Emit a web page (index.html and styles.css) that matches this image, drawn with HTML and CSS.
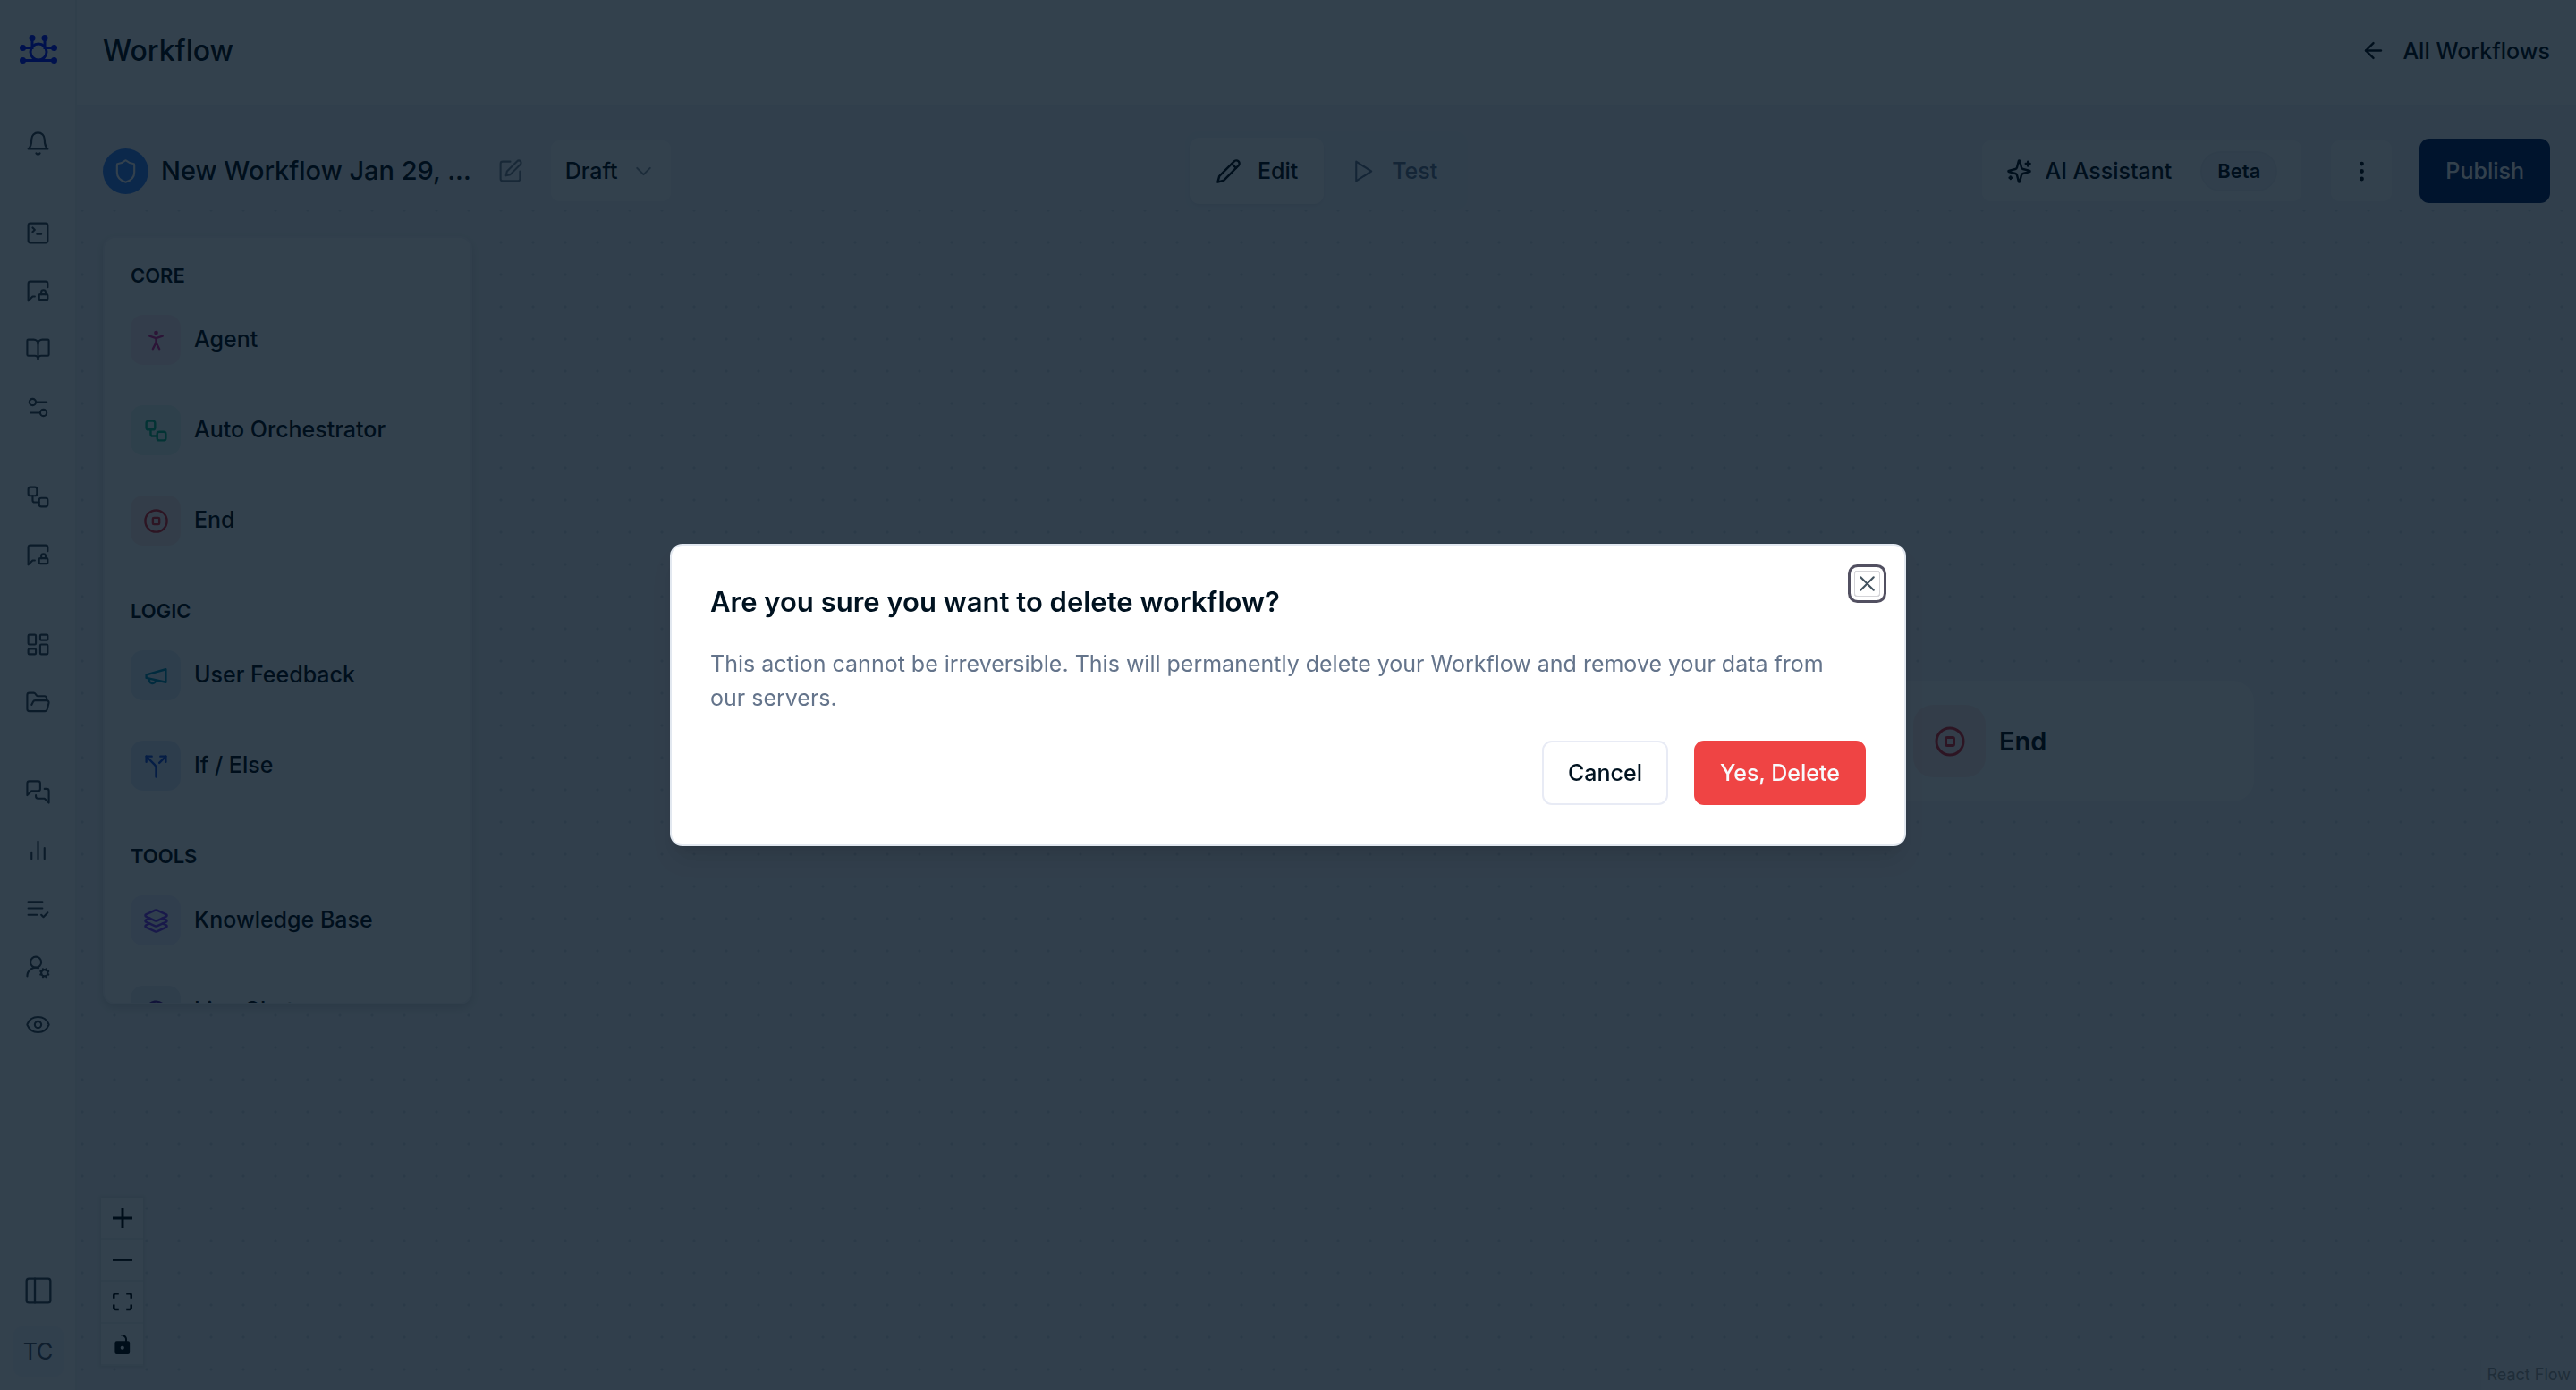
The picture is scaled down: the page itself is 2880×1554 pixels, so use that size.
FILE: index.html
```html
<!DOCTYPE html>
<html lang="en">
<head>
    <meta charset="UTF-8">
    <meta name="viewport" content="width=device-width, initial-scale=1.0">
    <title>Workflow</title>
    <link rel="stylesheet" href="styles.css">
</head>
<body>
    <!-- Icon sprite -->
    <svg class="sprite" aria-hidden="true">
        <symbol id="bell" viewBox="0 0 24 24"><path d="M6 8a6 6 0 0 1 12 0c0 7 3 9 3 9H3s3-2 3-9"/><path d="M10.3 21a1.94 1.94 0 0 0 3.4 0"/></symbol>
        <symbol id="terminal" viewBox="0 0 24 24"><rect x="3" y="3" width="18" height="18" rx="2"/><path d="m7 11 2-2-2-2"/><path d="M11 13h4"/></symbol>
        <symbol id="message-lock" viewBox="0 0 24 24"><path d="M19 15v-2a2 2 0 1 0-4 0v2"/><path d="M9 17H7l-4 4V5a2 2 0 0 1 2-2h14a2 2 0 0 1 2 2v3.5"/><rect x="13" y="15" width="8" height="5" rx="1"/></symbol>
        <symbol id="book" viewBox="0 0 24 24"><path d="M12 7v14"/><path d="M3 18a1 1 0 0 1-1-1V4a1 1 0 0 1 1-1h5a4 4 0 0 1 4 4 4 4 0 0 1 4-4h5a1 1 0 0 1 1 1v13a1 1 0 0 1-1 1h-6a3 3 0 0 0-3 3 3 3 0 0 0-3-3z"/></symbol>
        <symbol id="settings" viewBox="0 0 24 24"><path d="M20 7h-9"/><path d="M14 17H5"/><circle cx="17" cy="17" r="3"/><circle cx="7" cy="7" r="3"/></symbol>
        <symbol id="workflow" viewBox="0 0 24 24"><rect x="3" y="3" width="8" height="8" rx="2"/><path d="M7 11v4a2 2 0 0 0 2 2h4"/><rect x="13" y="13" width="8" height="8" rx="2"/></symbol>
        <symbol id="dashboard" viewBox="0 0 24 24"><rect x="3" y="3" width="7" height="9" rx="1"/><rect x="14" y="3" width="7" height="5" rx="1"/><rect x="14" y="12" width="7" height="9" rx="1"/><rect x="3" y="16" width="7" height="5" rx="1"/></symbol>
        <symbol id="folder" viewBox="0 0 24 24"><path d="m6 14 1.5-2.9A2 2 0 0 1 9.24 10H20a2 2 0 0 1 1.94 2.5l-1.54 6a2 2 0 0 1-1.95 1.5H4a2 2 0 0 1-2-2V5a2 2 0 0 1 2-2h3.9a2 2 0 0 1 1.69.9l.81 1.2a2 2 0 0 0 1.67.9H18a2 2 0 0 1 2 2v2"/></symbol>
        <symbol id="messages" viewBox="0 0 24 24"><path d="M14 9a2 2 0 0 1-2 2H6l-4 4V4a2 2 0 0 1 2-2h8a2 2 0 0 1 2 2z"/><path d="M18 9h2a2 2 0 0 1 2 2v11l-4-4h-6a2 2 0 0 1-2-2v-1"/></symbol>
        <symbol id="chart" viewBox="0 0 24 24"><path d="M18 20V10"/><path d="M12 20V4"/><path d="M6 20v-6"/></symbol>
        <symbol id="list-check" viewBox="0 0 24 24"><path d="M11 18H3"/><path d="m15 18 2 2 4-4"/><path d="M16 12H3"/><path d="M16 6H3"/></symbol>
        <symbol id="user-cog" viewBox="0 0 24 24"><path d="M2 21a8 8 0 0 1 10.434-7.62"/><circle cx="10" cy="8" r="5"/><circle cx="18" cy="18" r="3"/><path d="m19.5 14.3-.4.9"/><path d="m16.9 20.8-.4.9"/><path d="m21.7 19.5-.9-.4"/><path d="m15.2 16.9-.9-.4"/><path d="m21.7 16.5-.9.4"/><path d="m15.2 19.1-.9.4"/><path d="m19.5 21.7-.4-.9"/><path d="m16.9 15.2-.4-.9"/></symbol>
        <symbol id="eye" viewBox="0 0 24 24"><path d="M2.062 12.348a1 1 0 0 1 0-.696 10.75 10.75 0 0 1 19.876 0 1 1 0 0 1 0 .696 10.75 10.75 0 0 1-19.876 0"/><circle cx="12" cy="12" r="3"/></symbol>
        <symbol id="panel-left" viewBox="0 0 24 24"><rect x="2" y="2" width="20" height="20" rx="2"/><path d="M9 2v20"/></symbol>
        <symbol id="arrow-left" viewBox="0 0 24 24"><path d="m12 19-7-7 7-7"/><path d="M19 12H5"/></symbol>
        <symbol id="shield" viewBox="0 0 24 24"><path d="M20 13c0 5-3.5 7.5-7.66 8.95a1 1 0 0 1-.67-.01C7.5 20.5 4 18 4 13V6a1 1 0 0 1 1-1c2 0 4.5-1.2 6.24-2.72a1.17 1.17 0 0 1 1.52 0C14.51 3.81 17 5 19 5a1 1 0 0 1 1 1z"/></symbol>
        <symbol id="square-pen" viewBox="0 0 24 24"><path d="M12 3H5a2 2 0 0 0-2 2v14a2 2 0 0 0 2 2h14a2 2 0 0 0 2-2v-7"/><path d="M18.375 2.625a2.121 2.121 0 1 1 3 3L12 15l-4 1 1-4Z"/></symbol>
        <symbol id="chevron-down" viewBox="0 0 24 24"><path d="m6 9 6 6 6-6"/></symbol>
        <symbol id="pencil" viewBox="0 0 24 24"><path d="M17 3a2.85 2.83 0 1 1 4 4L7.5 20.5 2 22l1.5-5.5Z"/><path d="m15 5 4 4"/></symbol>
        <symbol id="play" viewBox="0 0 24 24"><path d="m6 3 14 9-14 9z"/></symbol>
        <symbol id="sparkles" viewBox="0 0 24 24"><path d="M9.937 15.5A2 2 0 0 0 8.5 14.063l-6.135-1.582a.5.5 0 0 1 0-.962L8.5 9.936A2 2 0 0 0 9.937 8.5l1.582-6.135a.5.5 0 0 1 .963 0L14.063 8.5A2 2 0 0 0 15.5 9.937l6.135 1.581a.5.5 0 0 1 0 .964L15.5 14.063a2 2 0 0 0-1.437 1.437l-1.582 6.135a.5.5 0 0 1-.963 0z"/><path d="M20 3v4"/><path d="M22 5h-4"/><path d="M4 17v2"/><path d="M5 18H3"/></symbol>
        <symbol id="more" viewBox="0 0 24 24"><circle cx="12" cy="12" r="1"/><circle cx="12" cy="5" r="1"/><circle cx="12" cy="19" r="1"/></symbol>
        <symbol id="person" viewBox="0 0 24 24"><circle cx="12" cy="5" r="1"/><path d="m9 20 3-6 3 6"/><path d="m6 8 6 2 6-2"/><path d="M12 10v4"/></symbol>
        <symbol id="stop" viewBox="0 0 24 24"><circle cx="12" cy="12" r="10"/><rect x="9" y="9" width="6" height="6" rx="1"/></symbol>
        <symbol id="megaphone" viewBox="0 0 24 24"><path d="m3 11 18-5v12L3 14v-3z"/><path d="M11.6 16.8a3 3 0 1 1-5.8-1.6"/></symbol>
        <symbol id="split" viewBox="0 0 24 24"><path d="M16 3h5v5"/><path d="M8 3H3v5"/><path d="M12 22v-8.3a4 4 0 0 0-1.172-2.872L3 3"/><path d="m15 9 6-6"/></symbol>
        <symbol id="layers" viewBox="0 0 24 24"><path d="M12.83 2.18a2 2 0 0 0-1.66 0L2.6 6.08a1 1 0 0 0 0 1.83l8.58 3.91a2 2 0 0 0 1.66 0l8.58-3.9a1 1 0 0 0 0-1.83Z"/><path d="m6.08 9.5-3.5 1.6a1 1 0 0 0 0 1.81l8.6 3.91a2 2 0 0 0 1.65 0l8.58-3.9a1 1 0 0 0 0-1.83l-3.5-1.59"/><path d="m6.08 14.5-3.5 1.6a1 1 0 0 0 0 1.81l8.6 3.91a2 2 0 0 0 1.65 0l8.58-3.9a1 1 0 0 0 0-1.83l-3.5-1.59"/></symbol>
        <symbol id="chat" viewBox="0 0 24 24"><path d="M7.9 20A9 9 0 1 0 4 16.1L2 22Z"/></symbol>
        <symbol id="close" viewBox="0 0 24 24"><path d="M18 6 6 18"/><path d="m6 6 12 12"/></symbol>
    </svg>

    <div class="app">
        <!-- Sidebar -->
        <nav class="sidebar" aria-label="Main">
            <a class="logo" href="#" aria-label="Home">
                <svg viewBox="0 0 42 32" width="42" height="32">
                    <g fill="none" stroke="currentColor" stroke-width="3">
                        <circle cx="21" cy="19" r="9"/>
                        <path d="M14 4v10.500H3.500M28 4v10.500h10.500M3.500 28.500h35"/>
                    </g>
                    <g fill="currentColor">
                        <circle cx="14" cy="3.500" r="3.500"/><circle cx="28" cy="3.500" r="3.500"/>
                        <circle cx="3.500" cy="14.500" r="3.500"/><circle cx="38.500" cy="14.500" r="3.500"/>
                        <circle cx="3.500" cy="28.500" r="3.500"/><circle cx="38.500" cy="28.500" r="3.500"/>
                    </g>
                </svg>
            </a>
            <div class="nav-groups">
                <div class="nav-group">
                    <a href="#" aria-label="Notifications"><svg class="icon"><use href="#bell"/></svg></a>
                </div>
                <div class="nav-group">
                    <a href="#" aria-label="Playground"><svg class="icon"><use href="#terminal"/></svg></a>
                    <a href="#" aria-label="Private chat"><svg class="icon"><use href="#message-lock"/></svg></a>
                    <a href="#" aria-label="Library"><svg class="icon"><use href="#book"/></svg></a>
                    <a href="#" aria-label="Configuration"><svg class="icon"><use href="#settings"/></svg></a>
                </div>
                <div class="nav-group">
                    <a href="#" aria-label="Workflows"><svg class="icon"><use href="#workflow"/></svg></a>
                    <a href="#" aria-label="Workflow chat"><svg class="icon"><use href="#message-lock"/></svg></a>
                </div>
                <div class="nav-group">
                    <a href="#" aria-label="Apps"><svg class="icon"><use href="#dashboard"/></svg></a>
                    <a href="#" aria-label="Files"><svg class="icon"><use href="#folder"/></svg></a>
                </div>
                <div class="nav-group">
                    <a href="#" aria-label="Conversations"><svg class="icon"><use href="#messages"/></svg></a>
                    <a href="#" aria-label="Analytics"><svg class="icon"><use href="#chart"/></svg></a>
                    <a href="#" aria-label="Tasks"><svg class="icon"><use href="#list-check"/></svg></a>
                    <a href="#" aria-label="User settings"><svg class="icon"><use href="#user-cog"/></svg></a>
                    <a href="#" aria-label="Monitoring"><svg class="icon"><use href="#eye"/></svg></a>
                </div>
            </div>
            <div class="sidebar-footer">
                <button class="toggle-sidebar" aria-label="Toggle sidebar"><svg class="icon"><use href="#panel-left"/></svg></button>
                <button class="avatar">TC</button>
            </div>
        </nav>

        <main class="main">
            <header class="header">
                <h1>Workflow</h1>
                <a class="back-link" href="#"><svg class="icon bold"><use href="#arrow-left"/></svg>All Workflows</a>
            </header>

            <!-- Toolbar -->
            <div class="toolbar">
                <div class="toolbar-left">
                    <span class="workflow-badge"><svg class="icon"><use href="#shield"/></svg></span>
                    <h2>New Workflow Jan 29, ...</h2>
                    <button class="rename" aria-label="Rename workflow"><svg class="icon"><use href="#square-pen"/></svg></button>
                    <div class="status">
                        <select aria-label="Status">
                            <option>Draft</option>
                            <option>Live</option>
                        </select>
                        <svg class="icon"><use href="#chevron-down"/></svg>
                    </div>
                </div>
                <div class="tabs" role="tablist">
                    <button class="tab active" role="tab" aria-selected="true"><svg class="icon bold"><use href="#pencil"/></svg>Edit</button>
                    <button class="tab" role="tab" aria-selected="false"><svg class="icon"><use href="#play"/></svg>Test</button>
                </div>
                <div class="toolbar-right">
                    <button class="btn assistant"><svg class="icon bold"><use href="#sparkles"/></svg>AI Assistant <span class="beta">Beta</span></button>
                    <button class="btn more" aria-label="More options"><svg class="icon bold"><use href="#more"/></svg></button>
                    <button class="btn publish">Publish</button>
                </div>
            </div>

            <!-- Canvas -->
            <div class="canvas">
                <aside class="palette">
                    <section>
                        <h3>CORE</h3>
                        <ul>
                            <li><span class="chip pink"><svg class="icon bold"><use href="#person"/></svg></span><span class="label">Agent</span></li>
                            <li><span class="chip green"><svg class="icon bold"><use href="#workflow"/></svg></span><span class="label">Auto Orchestrator</span></li>
                            <li><span class="chip red"><svg class="icon bold"><use href="#stop"/></svg></span><span class="label">End</span></li>
                        </ul>
                    </section>
                    <section>
                        <h3>LOGIC</h3>
                        <ul>
                            <li><span class="chip teal"><svg class="icon bold"><use href="#megaphone"/></svg></span><span class="label">User Feedback</span></li>
                            <li><span class="chip blue"><svg class="icon bold"><use href="#split"/></svg></span><span class="label">If / Else</span></li>
                        </ul>
                    </section>
                    <section>
                        <h3>TOOLS</h3>
                        <ul>
                            <li><span class="chip violet"><svg class="icon bold"><use href="#layers"/></svg></span><span class="label">Knowledge Base</span></li>
                            <li><span class="chip slate"><svg class="icon bold"><use href="#chat"/></svg></span><span class="label">Live Chat</span></li>
                        </ul>
                    </section>
                </aside>

                <div class="node">
                    <span class="chip red large"><svg class="icon bold"><use href="#stop"/></svg></span>End
                </div>

                <div class="controls">
                    <button aria-label="Zoom in"><svg viewBox="0 0 32 32"><path d="M32 18.133H18.133V32h-4.266V18.133H0v-4.266h13.867V0h4.266v13.867H32z"/></svg></button>
                    <button aria-label="Zoom out"><svg viewBox="0 0 32 5"><path d="M0 0h32v4.2H0z"/></svg></button>
                    <button aria-label="Fit view"><svg viewBox="0 0 32 30"><path d="M3.692 4.63c0-.53.4-.938.939-.938h5.215V0H4.708C2.13 0 0 2.054 0 4.63v5.216h3.692V4.631zM27.354 0h-5.2v3.692h5.17c.53 0 .984.4.984.939v5.215H32V4.631A4.624 4.624 0 0 0 27.354 0zm.954 24.83c0 .532-.4.94-.939.94h-5.215v3.768h5.215c2.577 0 4.631-2.13 4.631-4.707v-5.139h-3.692v5.139zm-23.677.94c-.531 0-.939-.4-.939-.94v-5.138H0v5.139c0 2.577 2.13 4.707 4.708 4.707h5.138V25.77H4.631z"/></svg></button>
                    <button aria-label="Toggle interactivity"><svg viewBox="0 0 25 32"><path d="M21.333 10.667H19.81V7.619C19.81 3.429 16.38 0 12.19 0c-4.114 1.828-1.37 2.133.305 2.438 1.676.305 4.42 2.59 4.42 5.181v3.048H3.047A3.056 3.056 0 000 13.714v15.238A3.056 3.056 0 003.048 32h18.285a3.056 3.056 0 003.048-3.048V13.714a3.056 3.056 0 00-3.048-3.047zM12.19 24.533a3.056 3.056 0 01-3.047-3.047 3.056 3.056 0 013.047-3.048 3.056 3.056 0 013.048 3.048 3.056 3.056 0 01-3.048 3.047z"/></svg></button>
                </div>
                <a class="attribution" href="#">React Flow</a>
            </div>
        </main>
    </div>

    <!-- Delete confirmation -->
    <div class="overlay">
        <div class="dialog" role="alertdialog" aria-modal="true" aria-labelledby="dialog-title" aria-describedby="dialog-text">
            <h2 id="dialog-title">Are you sure you want to delete workflow?</h2>
            <p id="dialog-text">This action cannot be irreversible. This will permanently delete your Workflow and remove your data from our servers.</p>
            <div class="dialog-actions">
                <button class="btn">Cancel</button>
                <button class="btn danger">Yes, Delete</button>
            </div>
            <button class="dialog-close" aria-label="Close"><svg class="icon"><use href="#close"/></svg></button>
        </div>
    </div>
</body>
</html>
```

FILE: styles.css
```css
/* ===== RESET & BASE STYLES ===== */
* {
    margin: 0;
    padding: 0;
    box-sizing: border-box;
}

body {
    font-family: Inter, 'Liberation Sans', sans-serif;
    font-size: 25px;
    font-weight: 500;
    line-height: 38px;
    color: #00050c;
    background: #fff;
}

button, select {
    font: inherit;
    color: inherit;
    background: none;
    border: none;
    cursor: pointer;
}

a {
    color: inherit;
    text-decoration: none;
}

ul {
    list-style: none;
}

.sprite {
    display: none;
}

.icon {
    width: 29px;
    height: 29px;
    flex-shrink: 0;
    fill: none;
    stroke: currentColor;
    stroke-width: 1.75;
    stroke-linecap: round;
    stroke-linejoin: round;
}

.icon.bold {
    stroke-width: 2;
}

/* ===== LAYOUT ===== */
.app {
    display: flex;
    height: 100vh;
    overflow: hidden;
}

.main {
    flex: 1;
    min-width: 0;
    display: flex;
    flex-direction: column;
    background: #f3f5f8;
}

/* ===== SIDEBAR ===== */
.sidebar {
    width: 86px;
    flex-shrink: 0;
    display: flex;
    flex-direction: column;
    align-items: center;
    padding: 39px 0 14px 1px;
    background: #fdfdfe;
    border-right: 2px solid #f1f3f6;
    color: #39414b;
}

.logo {
    display: flex;
    color: #0010ff;
}

.nav-groups {
    display: flex;
    flex-direction: column;
    gap: 35px;
    margin-top: 57px;
}

.nav-group a {
    display: flex;
    align-items: center;
    justify-content: center;
    width: 58px;
    height: 65px;
}

.sidebar-footer {
    display: flex;
    flex-direction: column;
    align-items: center;
    gap: 23px;
    margin-top: auto;
}

.toggle-sidebar {
    display: flex;
}

.toggle-sidebar .icon {
    width: 32px;
    height: 32px;
}

.avatar {
    width: 58px;
    height: 58px;
    border-radius: 14px;
    background: #f6f7fd;
    color: #4a535f;
    font-weight: 400;
}

/* ===== HEADER ===== */
.header {
    display: flex;
    align-items: center;
    justify-content: space-between;
    height: 119px;
    padding: 0 29px 4px;
    background: #fff;
    border-bottom: 2px solid #eef3f8;
}

.header h1 {
    font-size: 32px;
    font-weight: 500;
}

.back-link {
    display: flex;
    align-items: center;
    gap: 18px;
}

/* ===== TOOLBAR ===== */
.toolbar {
    display: flex;
    align-items: center;
    justify-content: space-between;
    padding: 28px 29px 0;
}

.toolbar-left, .toolbar-right {
    display: flex;
    align-items: center;
}

.toolbar-right {
    gap: 29px;
}

.workflow-badge {
    display: flex;
    align-items: center;
    justify-content: center;
    width: 51px;
    height: 51px;
    margin-right: 14px;
    border-radius: 50%;
    background: #3b82f6;
    color: #fff;
}

.toolbar-left h2 {
    font-size: 29px;
    font-weight: 500;
}

.rename {
    display: flex;
    margin: 0 29px;
    color: #7b8490;
}

.status {
    position: relative;
}

.status select {
    appearance: none;
    width: 138px;
    height: 72px;
    padding-left: 16px;
    border: 2px solid #f3f5f8;
    border-radius: 11px;
    background: #fff;
}

.status .icon {
    position: absolute;
    top: 22px;
    right: 18px;
    color: #8b94a0;
    pointer-events: none;
}

.tabs {
    display: flex;
    padding: 7px 5px;
    border-radius: 14px;
    background: #f1f4fb;
}

.tab {
    display: flex;
    align-items: center;
    gap: 18px;
    height: 74px;
    padding: 0 29px;
    border-radius: 11px;
    color: #64748b;
}

.tab.active {
    background: #fff;
    color: #00050c;
    box-shadow: 0 2px 4px rgba(0, 0, 0, 0.06);
}

.btn {
    display: flex;
    align-items: center;
    justify-content: center;
    height: 72px;
    padding: 0 27px;
    border: 2px solid #e8ebf5;
    border-radius: 11px;
    background: #fff;
}

.toolbar .btn {
    border-color: #f3f5f8;
}

.assistant {
    gap: 14px;
}

.beta {
    margin-left: 18px;
    padding: 0 17px;
    border: 2px solid #eef1f6;
    border-radius: 23px;
    background: #f3f5fb;
    font-size: 22px;
    font-weight: 600;
    line-height: 41px;
}

.toolbar .more {
    width: 72px;
    padding: 0;
}

.toolbar .publish {
    border-color: #001e5f;
    background: #001e5f;
    color: #fff;
}

/* ===== CANVAS ===== */
.canvas {
    position: relative;
    flex: 1;
    min-height: 0;
    padding: 29px;
    background-image: radial-gradient(circle, #d5dbe3 1px, transparent 2px);
    background-size: 36px 36px;
    background-position: -12px 18px;
}

.palette {
    width: 413px;
    height: calc(55vh + 4px);
    padding: 27px 29px;
    overflow: hidden;
    border: 2px solid #f3f5f8;
    border-radius: 14px;
    background: #fff;
    box-shadow: 0 4px 10px rgba(0, 0, 0, 0.12);
}

.palette section + section {
    margin-top: 58px;
}

.palette h3 {
    margin-bottom: 29px;
    font-size: 22px;
    font-weight: 600;
    line-height: 30px;
}

.palette ul {
    display: flex;
    flex-direction: column;
    gap: 45px;
}

.palette li {
    display: flex;
    align-items: center;
    gap: 15px;
}

.label {
    padding-bottom: 3px;
}

.chip {
    display: flex;
    align-items: center;
    justify-content: center;
    width: 56px;
    height: 56px;
    border-radius: 14px;
}

.chip.large {
    width: 81px;
    height: 81px;
    border-radius: 22px;
}

.chip.large .icon {
    width: 36px;
    height: 36px;
}

.pink { background: #fdecf2; color: #db2790; }
.green { background: #e6f8f4; color: #10b981; }
.red { background: #fdecea; color: #e02430; }
.teal { background: #e6f1fa; color: #0891b2; }
.blue { background: #e2ebfb; color: #1d4ed8; }
.violet { background: #eeedfd; color: #7c3aed; }
.slate { background: #e9edf5; color: #581c9c; }

.node {
    position: absolute;
    left: 2024px;
    top: 524px;
    display: flex;
    align-items: center;
    gap: 15px;
    width: 412px;
    padding: 27px;
    border: 2px solid #f3f5f8;
    border-radius: 26px;
    background: #fff;
    font-size: 29px;
    font-weight: 600;
}

.controls {
    position: absolute;
    left: 27px;
    bottom: 27px;
    display: flex;
    flex-direction: column;
    background: #fff;
    box-shadow: 0 0 3px 2px rgba(0, 0, 0, 0.06);
}

.controls button {
    display: flex;
    align-items: center;
    justify-content: center;
    width: 47px;
    height: 47px;
    border-bottom: 2px solid #f0f2f5;
}

.controls svg {
    width: 22px;
    max-height: 22px;
}

.attribution {
    position: absolute;
    right: 0;
    bottom: 0;
    padding: 4px 6px;
    background: #f9fafc;
    color: #999;
    font-size: 18px;
    font-weight: 400;
    line-height: 26px;
}

/* ===== DIALOG ===== */
.overlay {
    position: fixed;
    inset: 0;
    display: flex;
    align-items: center;
    justify-content: center;
    background: rgba(0, 18, 32, 0.8);
}

.dialog {
    position: relative;
    display: flex;
    flex-direction: column;
    gap: 29px;
    width: 1382px;
    max-width: 100%;
    padding: 42px 43px 44px;
    border: 2px solid #e2e8f0;
    border-radius: 14px;
    background: #fff;
    color: #001220;
    box-shadow: 0 18px 27px -5px rgba(0, 0, 0, 0.1), 0 7px 11px -7px rgba(0, 0, 0, 0.1);
}

.dialog h2 {
    font-size: 31px;
    font-weight: 600;
    line-height: 42px;
}

.dialog p {
    padding-right: 29px;
    color: #64748b;
    font-weight: 400;
}

.dialog-actions {
    display: flex;
    justify-content: flex-end;
    gap: 29px;
}

.btn.danger {
    border-color: #ef4444;
    background: #ef4444;
    color: #f8fafc;
}

.dialog-close {
    position: absolute;
    top: 28px;
    right: 27px;
    display: flex;
    border-radius: 4px;
    color: #42525f;
    box-shadow: inset 0 0 0 1px #d4d4d8, 0 0 0 4px #fff, 0 0 0 7px #525061;
}
```
